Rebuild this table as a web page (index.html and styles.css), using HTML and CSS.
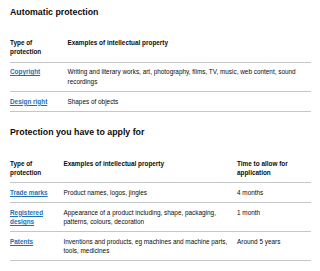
FILE: index.html
```html
<!DOCTYPE html>
<html lang="en">
<head>
<meta charset="utf-8">
<title>Intellectual property</title>
<link rel="stylesheet" href="styles.css">
</head>
<body>
<main class="page">
  <h2 class="heading">Automatic protection</h2>
  <table class="table table--auto">
    <colgroup><col class="c1"><col class="c2"></colgroup>
    <thead>
      <tr><th>Type of protection</th><th>Examples of intellectual property</th></tr>
    </thead>
    <tbody>
      <tr><td><a href="#">Copyright</a></td><td>Writing and literary works, art, photography, films, TV, music, web content, sound recordings</td></tr>
      <tr><td><a href="#">Design right</a></td><td>Shapes of objects</td></tr>
    </tbody>
  </table>

  <h2 class="heading heading--second">Protection you have to apply for</h2>
  <table class="table table--apply">
    <colgroup><col class="c1"><col class="c2"><col class="c3"></colgroup>
    <thead>
      <tr><th>Type of protection</th><th>Examples of intellectual property</th><th>Time to allow for application</th></tr>
    </thead>
    <tbody>
      <tr><td><a href="#">Trade marks</a></td><td>Product names, logos, jingles</td><td>4 months</td></tr>
      <tr><td><a href="#">Registered designs</a></td><td>Appearance of a product including, shape, packaging, patterns, colours, decoration</td><td>1 month</td></tr>
      <tr><td><a href="#">Patents</a></td><td>Inventions and products, eg machines and machine parts, tools, medicines</td><td>Around 5 years</td></tr>
    </tbody>
  </table>
</main>
</body>
</html>
```
FILE: styles.css
```css
html, body {
  margin: 0;
  padding: 0;
  background: #ffffff;
}
body {
  font-family: "Liberation Sans", Arial, sans-serif;
  color: #0b0c0c;
}
.page {
  padding: 7px 9px 0 10px;
}
.heading {
  margin: 0;
  font-size: 8.8px;
  line-height: 11px;
  font-weight: 700;
}
.heading--second {
  margin-top: 15.5px;
}
.table {
  margin-top: 15.4px;
  width: 301px;
  border-collapse: collapse;
  border-spacing: 0;
  table-layout: fixed;
  font-size: 6.4px;
  line-height: 9.2px;
}
.table--auto .c1 { width: 57.5px; }
.table--apply .c1 { width: 53.5px; }
.table--apply .c2 { width: 173.5px; }
.table th, .table td {
  padding: 4.9px 7.5px 4.9px 0;
  text-align: left;
  vertical-align: top;
  border-bottom: 1px solid #c4c6c7;
}
.table th:last-child, .table td:last-child {
  padding-right: 0;
}
.table th {
  font-weight: 700;
}
.table a {
  color: #1d70b8;
  font-weight: 700;
  text-decoration: underline;
  text-decoration-thickness: 1px;
  text-underline-offset: 1px;
}
```
